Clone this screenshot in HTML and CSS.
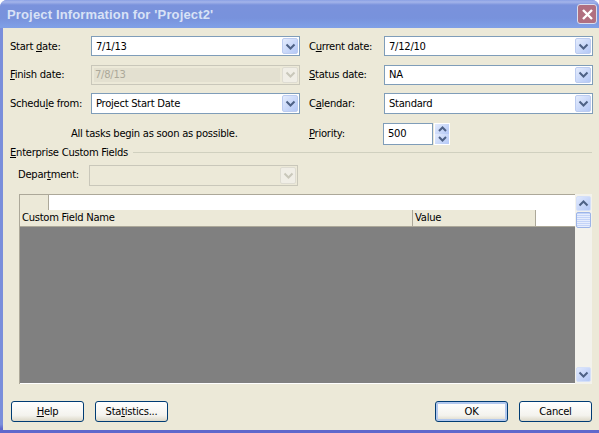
FILE: index.html
```html
<!DOCTYPE html>
<html lang="en">
  <head>
    <meta charset="UTF-8" />
    <title>Project Information</title>
    <link rel="stylesheet" href="styles.css">
  </head>
  <body>
    <div class="window">
      <header class="titlebar">
        <span class="title">Project Information for 'Project2'</span>
        <button class="close" type="button">
          <svg width="13" height="13" viewBox="0 0 13 13"><path d="M2 2l9 9M11 2l-9 9" stroke="#fff" stroke-width="2.4" fill="none"/></svg>
        </button>
      </header>

      <main class="content">
        <div class="form">
          <label class="lbl">Start <u>d</u>ate:</label>
          <div class="combo"><span class="value">7/1/13</span><span class="arrow"><svg width="11" height="7" viewBox="0 0 11 7"><path d="M1.5 1.5l4 4 4-4" stroke="#4d6185" stroke-width="2" fill="none"/></svg></span></div>
          <label class="lbl lbl-right">C<u>u</u>rrent date:</label>
          <div class="combo"><span class="value">7/12/10</span><span class="arrow"><svg width="11" height="7" viewBox="0 0 11 7"><path d="M1.5 1.5l4 4 4-4" stroke="#4d6185" stroke-width="2" fill="none"/></svg></span></div>

          <label class="lbl"><u>F</u>inish date:</label>
          <div class="combo disabled"><span class="value selected">7/8/13</span><span class="arrow"><svg width="11" height="7" viewBox="0 0 11 7"><path d="M1.5 1.5l4 4 4-4" stroke="#c9c7ba" stroke-width="2" fill="none"/></svg></span></div>
          <label class="lbl lbl-right"><u>S</u>tatus date:</label>
          <div class="combo"><span class="value">NA</span><span class="arrow"><svg width="11" height="7" viewBox="0 0 11 7"><path d="M1.5 1.5l4 4 4-4" stroke="#4d6185" stroke-width="2" fill="none"/></svg></span></div>

          <label class="lbl">Schedu<u>l</u>e from:</label>
          <div class="combo"><span class="value">Project Start Date</span><span class="arrow"><svg width="11" height="7" viewBox="0 0 11 7"><path d="M1.5 1.5l4 4 4-4" stroke="#4d6185" stroke-width="2" fill="none"/></svg></span></div>
          <label class="lbl lbl-right">C<u>a</u>lendar:</label>
          <div class="combo"><span class="value">Standard</span><span class="arrow"><svg width="11" height="7" viewBox="0 0 11 7"><path d="M1.5 1.5l4 4 4-4" stroke="#4d6185" stroke-width="2" fill="none"/></svg></span></div>

          <p class="hint">All tasks begin as soon as possible.</p>
          <label class="lbl lbl-right"><u>P</u>riority:</label>
          <div class="spinner">
            <div class="spin-input">500</div>
            <div class="spin-btns">
              <span class="spin-btn"><svg width="9" height="6" viewBox="0 0 9 6"><path d="M1 5l3.5-3.5L8 5" stroke="#4d6185" stroke-width="2" fill="none"/></svg></span>
              <span class="spin-btn"><svg width="9" height="6" viewBox="0 0 9 6"><path d="M1 1l3.5 3.5L8 1" stroke="#4d6185" stroke-width="2" fill="none"/></svg></span>
            </div>
          </div>
        </div>

        <div class="section"><span><u>E</u>nterprise Custom Fields</span><i class="rule"></i></div>

        <div class="dept">
          <label class="lbl">Depar<u>t</u>ment:</label>
          <div class="combo disabled"><span class="value"></span><span class="arrow"><svg width="11" height="7" viewBox="0 0 11 7"><path d="M1.5 1.5l4 4 4-4" stroke="#c9c7ba" stroke-width="2" fill="none"/></svg></span></div>
        </div>

        <div class="grid">
          <div class="grid-main">
            <div class="grid-top"><span class="corner"></span></div>
            <div class="grid-head">
              <span class="col col-name">Custom Field Name</span>
              <span class="col col-value">Value</span>
            </div>
            <div class="grid-body"></div>
          </div>
          <div class="scrollbar">
            <span class="sb-btn"><svg width="11" height="7" viewBox="0 0 11 7"><path d="M1.5 5.5l4-4 4 4" stroke="#4d6185" stroke-width="2" fill="none"/></svg></span>
            <span class="sb-thumb"></span>
            <span class="sb-track"></span>
            <span class="sb-btn"><svg width="11" height="7" viewBox="0 0 11 7"><path d="M1.5 1.5l4 4 4-4" stroke="#4d6185" stroke-width="2" fill="none"/></svg></span>
          </div>
        </div>

        <div class="actions">
          <button class="btn" type="button"><u>H</u>elp</button>
          <button class="btn" type="button">Sta<u>t</u>istics...</button>
          <span class="spacer"></span>
          <button class="btn btn-default" type="button">OK</button>
          <button class="btn" type="button">Cancel</button>
        </div>
      </main>
    </div>
  </body>
</html>
```

FILE: styles.css
```css
* {
  margin: 0;
  padding: 0;
  box-sizing: border-box;
}

body {
  width: 599px;
  height: 433px;
  overflow: hidden;
  font-family: "DejaVu Sans", sans-serif;
  font-size: 10px;
  letter-spacing: -0.27px;
  color: #000;
  background-color: #fff;
}

u {
  text-decoration-thickness: 1px;
}

.window {
  height: 433px;
  display: flex;
  flex-direction: column;
  background: linear-gradient(#7a8edb 98%, #5f68cc 99%);
  border-radius: 7px 7px 0 0;
  padding: 0 0 3px 3px;
}

.titlebar {
  height: 28px;
  flex: none;
  margin-left: -3px;
  padding: 0 2px 0 7px;
  display: flex;
  align-items: center;
  justify-content: space-between;
  border-radius: 7px 7px 0 0;
  background: linear-gradient(#8aa0e4 0, #a4b4ea 2px, #7a92dc 5px, #7892dc 18px, #7f9fe6 27px);
}

.title {
  font-family: "Liberation Sans", sans-serif;
  font-weight: bold;
  font-size: 13px;
  letter-spacing: 0.15px;
  color: #d8e2f6;
}

.close {
  width: 20px;
  height: 20px;
  border: 1px solid #d9dfee;
  border-radius: 3px;
  background-color: #b06f80;
  display: flex;
  align-items: center;
  justify-content: center;
}

.content {
  flex: 1;
  display: flex;
  flex-direction: column;
  background-color: #ece9d8;
  padding: 8px 7px 8px 7px;
}

.form {
  display: grid;
  grid-template-columns: 81px 209px 84px 209px;
  grid-template-rows: 20px 20px 21px 22px;
  row-gap: 8.5px;
  align-items: center;
}

.lbl {
  white-space: nowrap;
}

.lbl-right {
  padding-left: 9px;
}

.combo {
  height: 100%;
  display: flex;
  align-items: center;
  background-color: #fff;
  border: 1px solid #7f9db9;
  padding: 1px;
}

.value {
  flex: 1;
  padding-left: 3px;
}

.arrow {
  width: 16px;
  height: 100%;
  flex: none;
  display: flex;
  align-items: center;
  justify-content: center;
  border: 1px solid #bcccf0;
  border-radius: 2px;
  background: linear-gradient(135deg, #e4ecfd, #b4c8f6);
}

.combo.disabled {
  background-color: #ece9d8;
  border-color: #c9c7ba;
  color: #aca899;
}

.combo.disabled .arrow {
  border-color: #dedcd2;
  background: #f0eee6;
}

.selected {
  align-self: stretch;
  display: flex;
  align-items: center;
  margin: 1px 2px 1px 1px;
  padding-left: 1px;
  background-color: #e3e0d0;
}

.hint {
  grid-column: 1 / span 2;
  padding-left: 61px;
}

.spinner {
  display: flex;
  height: 22px;
  margin-left: -1px;
  gap: 1px;
}

.spin-input {
  width: 50px;
  border: 1px solid #7f9db9;
  background-color: #fff;
  padding-left: 4px;
  line-height: 20px;
}

.spin-btns {
  width: 16px;
  display: flex;
  flex-direction: column;
  border: 1px solid #fff;
}

.spin-btn {
  flex: 1;
  display: flex;
  align-items: center;
  justify-content: center;
  background: linear-gradient(135deg, #e4ecfd, #b4c8f6);
}

.section {
  display: flex;
  align-items: center;
  gap: 5px;
  height: 16px;
}

.rule {
  flex: 1;
  height: 1px;
  background-color: #d0d0bf;
}

.dept {
  display: flex;
  align-items: center;
  height: 21px;
  margin-top: 4.5px;
}

.dept .lbl {
  width: 79px;
  flex: none;
  padding-left: 8px;
  margin-top: -3px;
}

.dept .combo {
  width: 209px;
}

.grid {
  margin: 8px 0 0 9px;
  width: 573px;
  height: 190px;
  display: flex;
  background-color: #fff;
}

.grid-main {
  flex: 1;
  display: flex;
  flex-direction: column;
  border-top: 1px solid #aca899;
  border-left: 1px solid #aca899;
  padding-bottom: 1px;
}

.grid-top {
  height: 15px;
  background-color: #fff;
}

.corner {
  display: block;
  width: 29px;
  height: 15px;
  background-color: #ece9d8;
  border-right: 1px solid #aca899;
}

.grid-head {
  height: 17px;
  display: flex;
  border-bottom: 1px solid #aca899;
  background-color: #fff;
}

.col {
  height: 16px;
  line-height: 16px;
  background-color: #ece9d8;
  padding-left: 2px;
  border-right: 1px solid #aca899;
}

.col-name {
  width: 393px;
}

.col-value {
  width: 123px;
}

.grid-body {
  flex: 1;
  background-color: #808080;
}

.scrollbar {
  width: 17px;
  display: flex;
  flex-direction: column;
  background-color: #f3f2ec;
  padding: 2px 0;
}

.sb-btn {
  height: 15px;
  margin: 0 1px;
  display: flex;
  align-items: center;
  justify-content: center;
  border-radius: 2px;
  border: 1px solid #d5e0f8;
  background: linear-gradient(135deg, #dfe8fd, #b4c8f6);
}

.sb-thumb {
  height: 16px;
  margin: 1px 1px 0;
  border-radius: 2px;
  border: 1px solid #9cb4e8;
  background: repeating-linear-gradient(#c4d4f8 0 1px, #e6edfd 1px 2px);
}

.sb-track {
  flex: 1;
}

.actions {
  display: flex;
  gap: 11px;
  margin-top: 17px;
  padding-left: 1px;
}

.spacer {
  flex: 1;
}

.btn {
  width: 73px;
  height: 21px;
  font-family: inherit;
  font-size: 10px;
  letter-spacing: inherit;
  border: 1px solid #003c74;
  border-radius: 3px;
  background: linear-gradient(#fff, #f4f3ee 70%, #dcd8c8);
  color: #000;
}

.btn-default {
  box-shadow: inset 0 0 0 2px #b2c8ee;
}
```
